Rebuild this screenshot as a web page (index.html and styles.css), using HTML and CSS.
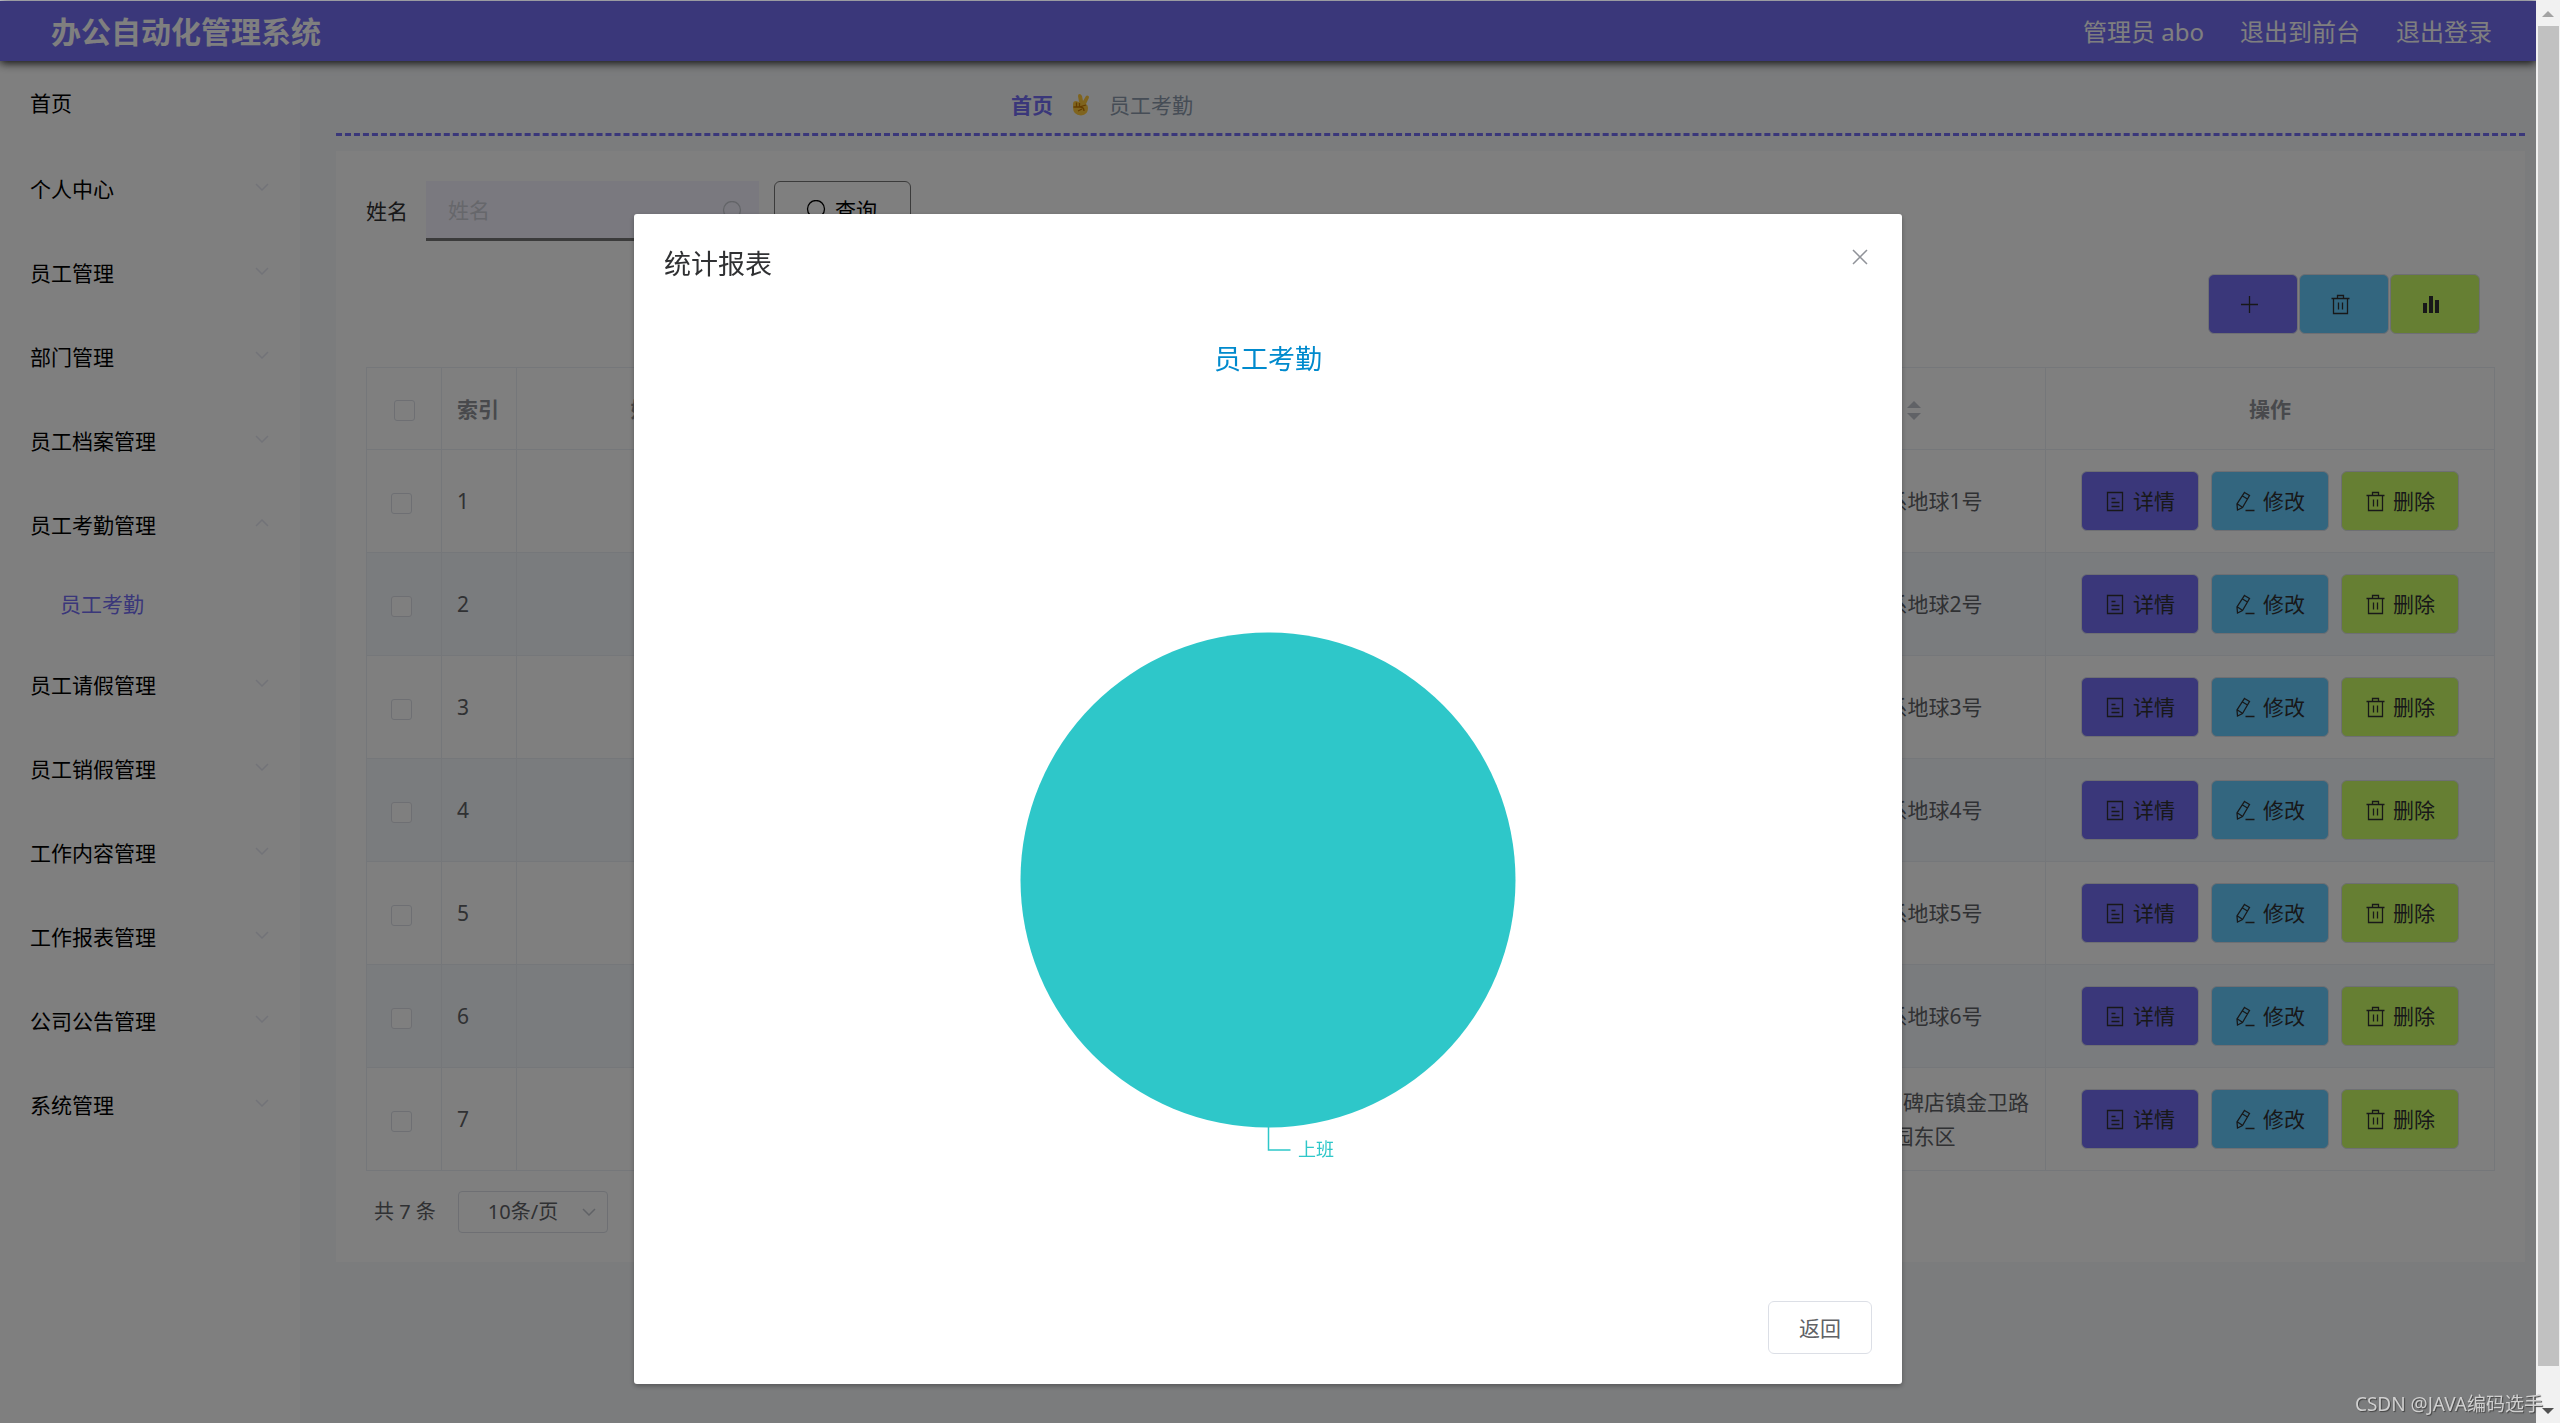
FILE: index.html
```html
<!DOCTYPE html>
<html lang="zh-CN">
<head>
<meta charset="utf-8">
<title>办公自动化管理系统</title>
<link rel="stylesheet" href="styles.css">
</head>
<body>
<svg class="sprite" aria-hidden="true">
  <symbol id="i-down" viewBox="0 0 14 8"><path d="M1 1l6 6 6-6"/></symbol>
  <symbol id="i-up" viewBox="0 0 14 8"><path d="M1 7l6-6 6 6"/></symbol>
  <symbol id="i-search" viewBox="0 0 21 21"><circle cx="10" cy="9" r="8.5"/><path d="M16 15l4 5"/></symbol>
  <symbol id="i-plus" viewBox="0 0 21 21"><path d="M2 10.5h17M10.5 2v17"/></symbol>
  <symbol id="i-trash" viewBox="0 0 21 21"><path d="M1.500 4.500h18M7.500 4.500v-3h6v3M3.500 4.500v15h14v-15M8.500 8.500v7M12.500 8.500v7"/></symbol>
  <symbol id="i-chart" viewBox="0 0 21 21"><path class="solid" d="M2 9h4v10H2zM8 2h4v17H8zM14 6h4v13h-4z"/></symbol>
  <symbol id="i-doc" viewBox="0 0 21 21"><path d="M2.500 1.500h15v18h-15zM6.500 7.500h4M6.500 11.500h8M6.500 15.500h8"/></symbol>
  <symbol id="i-edit" viewBox="0 0 21 21"><path d="M9.500 1.500l5 3-7 12-5 2.500-.5-6zM7.500 5l5 3M2.500 13l4.500 3M10.500 19.500h9"/></symbol>
  <symbol id="i-close" viewBox="0 0 16 16"><path d="M1 1l14 14M15 1L1 15"/></symbol>
</svg>

<div class="page">
  <header class="topbar">
    <h1 class="brand">办公自动化管理系统</h1>
    <nav class="account">
      <span>管理员 abo</span>
      <a href="#">退出到前台</a>
      <a href="#">退出登录</a>
    </nav>
  </header>

  <div class="body">
    <nav class="sidebar">
      <a class="item home" href="#">首页</a>
      <a class="item" href="#">个人中心<svg class="arrow"><use href="#i-down"/></svg></a>
      <a class="item" href="#">员工管理<svg class="arrow"><use href="#i-down"/></svg></a>
      <a class="item" href="#">部门管理<svg class="arrow"><use href="#i-down"/></svg></a>
      <a class="item" href="#">员工档案管理<svg class="arrow"><use href="#i-down"/></svg></a>
      <a class="item" href="#">员工考勤管理<svg class="arrow"><use href="#i-up"/></svg></a>
      <a class="subitem" href="#">员工考勤</a>
      <a class="item" href="#">员工请假管理<svg class="arrow"><use href="#i-down"/></svg></a>
      <a class="item" href="#">员工销假管理<svg class="arrow"><use href="#i-down"/></svg></a>
      <a class="item" href="#">工作内容管理<svg class="arrow"><use href="#i-down"/></svg></a>
      <a class="item" href="#">工作报表管理<svg class="arrow"><use href="#i-down"/></svg></a>
      <a class="item" href="#">公司公告管理<svg class="arrow"><use href="#i-down"/></svg></a>
      <a class="item" href="#">系统管理<svg class="arrow"><use href="#i-down"/></svg></a>
    </nav>

    <main class="content">
      <div class="crumbs">
        <a href="#">首页</a>
        <svg class="hand" viewBox="0 0 18 22"><path fill="#ffc83d" d="M1 10q0-3 3-3l3 1L6 2q0-2 1.500-2T10 2l1 5 3-5q1-1 2.500 0 .8 1 .3 2L14 10q2 1 2 4 0 7-7 7.500-8-.5-8-8z"/><path fill="none" stroke="#c87800" stroke-width="1.300" d="M1.500 13h6V9M4.500 8.500V13M7 13l7-2M8 13q4 0 4 4M6 17l4-2"/></svg>
        <span>员工考勤</span>
      </div>

      <section class="card">
        <form class="search">
          <label for="name">姓名</label>
          <div class="field">
            <input id="name" type="text" placeholder="姓名">
            <svg class="icon"><use href="#i-search"/></svg>
          </div>
          <button class="query" type="button"><svg class="icon"><use href="#i-search"/></svg>查询</button>
        </form>

        <div class="tools">
          <button class="tool violet" type="button" aria-label="新增"><svg class="icon"><use href="#i-plus"/></svg></button>
          <button class="tool blue" type="button" aria-label="删除"><svg class="icon"><use href="#i-trash"/></svg></button>
          <button class="tool green" type="button" aria-label="统计报表"><svg class="icon"><use href="#i-chart"/></svg></button>
        </div>

        <table class="grid">
          <colgroup><col class="c-check"><col class="c-index"><col><col><col><col><col><col class="c-ops"></colgroup>
          <thead>
            <tr>
              <th><input type="checkbox" aria-label="全选"></th>
              <th class="left">索引</th>
              <th>姓名<span class="sort"></span></th><th></th><th></th><th></th>
              <th>地址<span class="sort"></span></th>
              <th>操作</th>
            </tr>
          </thead>
          <tbody id="rows"></tbody>
        </table>

        <div class="pager">
          <span>共 7 条</span>
          <div class="size">
            <select aria-label="每页条数"><option>10条/页</option></select>
            <svg class="arrow"><use href="#i-down"/></svg>
          </div>
        </div>
      </section>
    </main>
  </div>
</div>

<div class="overlay">
  <section class="dialog" role="dialog" aria-labelledby="dialog-title">
    <header class="dialog-head">
      <h2 id="dialog-title">统计报表</h2>
      <button class="close" type="button" aria-label="关闭"><svg><use href="#i-close"/></svg></button>
    </header>
    <svg class="chart" viewBox="0 0 1208 900" role="img" aria-label="员工考勤">
      <text class="chart-title" x="604" y="29">员工考勤</text>
      <circle class="slice" cx="604" cy="540" r="247.500"/>
      <path class="leader" d="M604.500 787v23h22"/>
      <text class="chart-label" x="634" y="816">上班</text>
    </svg>
    <footer class="dialog-foot"><button type="button">返回</button></footer>
  </section>
</div>

<div class="scrollbar" aria-hidden="true"><i class="up"></i><b></b><i class="down"></i></div>
<p class="watermark">CSDN @JAVA编码选手</p>

<script src="rows.js"></script>
</body>
</html>
```

FILE: rows.js
```js
const addresses = [1, 2, 3, 4, 5, 6].map(n => `宇宙银河系地球${n}号`);
addresses.push('北京市朝阳区高碑店镇金卫路文化家园东区');

const action = (tone, icon, label) =>
  `<button class="action ${tone}" type="button"><svg class="icon"><use href="#${icon}"/></svg>${label}</button>`;

document.getElementById('rows').innerHTML = addresses.map((address, i) => `
  <tr>
    <td class="check"><input type="checkbox" aria-label="选择第${i + 1}行"></td>
    <td class="left">${i + 1}</td>
    <td></td><td></td><td></td><td></td>
    <td>${address}</td>
    <td><div class="actions">
      ${action('violet', 'i-doc', '详情')}
      ${action('blue', 'i-edit', '修改')}
      ${action('green', 'i-trash', '删除')}
    </div></td>
  </tr>`).join('');
```

FILE: styles.css
```css
* { box-sizing: border-box; }

body {
  margin: 0;
  font: 21px/34px "Noto Sans", "Noto Sans CJK SC", sans-serif;
  color: #606266;
  background: #f6f8fb;
}

a { color: inherit; text-decoration: none; }
h1, h2, p { margin: 0; }
button, input, select { font: inherit; color: inherit; margin: 0; }

svg { fill: none; stroke: currentColor; }
.sprite { position: absolute; width: 0; height: 0; }
.icon { width: 21px; height: 21px; flex: none; stroke-width: 1.3; }
.solid { fill: currentColor; stroke: none; }
.arrow { width: 14px; height: 8px; stroke-width: 1.5; }

.page {
  display: flex;
  flex-direction: column;
  min-height: 100vh;
  margin-right: 24px;
  border-top: 1px solid #d4d6de;
}

/* Top bar */
.topbar {
  position: relative;
  display: flex;
  align-items: center;
  justify-content: space-between;
  height: 60px;
  padding: 2px 44px 0 51px;
  color: #fff;
  background: #746ef4;
  box-shadow: 0 2px 9px rgba(0, 0, 0, .9);
}
.brand { font-size: 30px; line-height: 40px; }
.account { display: flex; gap: 36px; font-size: 24px; }

.body { display: flex; flex: 1; }

/* Side menu */
.sidebar { flex: none; width: 300px; background: #fff; color: #000; }
.item {
  display: flex;
  align-items: center;
  justify-content: space-between;
  height: 84px;
  padding: 0 31px 0 30px;
}
.home { height: 86px; padding-bottom: 2px; }
.item .arrow { color: #e4e6f0; margin-bottom: 4px; }
.subitem {
  display: flex;
  align-items: center;
  height: 76px;
  padding: 0 0 2px 60px;
  color: #746ef4;
}

/* Content */
.content { flex: 1; padding: 28px 11px 0 36px; }
.crumbs {
  display: flex;
  align-items: center;
  gap: 19px;
  height: 47px;
  padding: 0 0 13px 675px;
  margin-bottom: 15px;
  border-bottom: 3px dashed #746ef4;
  color: #8c9aac;
}
.crumbs a { font-weight: 700; color: #746ef4; }
.hand { width: 18px; height: 22px; stroke: none; }

.card { padding: 30px 30px 29px; background: #fff; }
.search { display: flex; align-items: center; color: #303133; }
.field { position: relative; width: 333px; margin: 0 15px 0 18px; }
.field input {
  display: block;
  width: 100%;
  height: 60px;
  padding: 0 45px 0 22px;
  border: 0;
  border-bottom: 3px solid #777;
  background: #f4f3fe;
}
.field input::placeholder { color: #cdced6; }
.field .icon { position: absolute; right: 16px; top: 20px; color: #c6c8d0; }
.query {
  display: flex;
  align-items: center;
  justify-content: center;
  gap: 8px;
  width: 137px;
  height: 60px;
  padding: 0 2px 2px 0;
  border: 1px solid #777;
  border-radius: 6px;
  background: none;
  color: #000;
}

.tools { display: flex; justify-content: flex-end; gap: 1px; padding: 33px 15px 33px 0; }
.tool, .action {
  display: flex;
  align-items: center;
  height: 60px;
  border: 1px solid #dcdfe6;
  border-radius: 6px;
  color: #303133;
}
.tool { width: 90px; padding: 0 30px; }
.violet { background: #746ef4; }
.blue { background: #66ccff; }
.green { background: #ccff66; }

.grid {
  width: 100%;
  table-layout: fixed;
  border-collapse: collapse;
}
.c-check, .c-index { width: 75px; }
.c-ops { width: 449px; }
.grid th, .grid td { border: 1px solid #ebeef5; text-align: center; }
.grid th { height: 82px; padding: 0 15px; color: #909399; }
.grid td { height: 103px; padding: 0 14px; }
.grid .left { text-align: left; padding-left: 15px; }
.grid td.check { padding-right: 20px; }
.grid tbody tr:nth-child(even) { background: #f5f8fd; }
.grid input {
  appearance: none;
  display: inline-block;
  width: 21px;
  height: 21px;
  border: 1px solid #dcdfe6;
  border-radius: 3px;
  background: #fff;
  vertical-align: middle;
}
.sort {
  display: inline-flex;
  flex-direction: column;
  align-items: center;
  gap: 5px;
  width: 36px;
  vertical-align: middle;
}
.sort::before, .sort::after { content: ""; border: 7px solid transparent; }
.sort::before { border-top: 0; border-bottom-color: #c0c4cc; }
.sort::after { border-bottom: 0; border-top-color: #c0c4cc; }

.actions { display: flex; justify-content: center; gap: 12px; }
.action { gap: 7px; width: 118px; padding: 0 0 0 23px; }

.pager { display: flex; align-items: center; gap: 22px; padding: 20px 0 0 8px; font-size: 20px; }
.size { position: relative; width: 150px; }
.size select {
  display: block;
  appearance: none;
  width: 100%;
  height: 42px;
  padding: 0 45px 0 29px;
  border: 1px solid #dcdfe6;
  border-radius: 4px;
  background: #fff;
}
.size .arrow { position: absolute; right: 12px; top: 17px; color: #c0c4cc; }

/* Dialog */
.overlay { position: fixed; inset: 1px 24px 0 0; background: rgba(0, 0, 0, .5); }
.dialog {
  width: 50%;
  margin: 15vh auto 0;
  padding: 30px;
  border-radius: 3px;
  background: #fff;
  box-shadow: 0 2px 5px rgba(0, 0, 0, .3);
}
.dialog-head { display: flex; justify-content: space-between; align-items: flex-start; }
.dialog-head h2 { font-size: 27px; line-height: 40px; font-weight: 400; color: #303133; }
.close { display: flex; padding: 5px 4px; border: 0; background: none; color: #909399; }
.close svg { width: 16px; height: 16px; stroke-width: 1.5; }
.chart { display: block; width: 100%; margin: 56px 0 61px; }
.chart text { stroke: none; }
.chart-title { font-size: 27px; fill: #008acd; text-anchor: middle; }
.slice { fill: #2ec7c9; stroke: none; }
.leader { stroke: #2ec7c9; stroke-width: 1.5; }
.chart-label { font-size: 18px; fill: #2ec7c9; }
.dialog-foot { display: flex; justify-content: flex-end; }
.dialog-foot button {
  width: 104px;
  height: 53px;
  padding: 0;
  border: 1px solid #dcdfe6;
  border-radius: 6px;
  background: #fff;
}

/* Window scrollbar */
.scrollbar {
  position: fixed;
  inset: 0 0 0 auto;
  display: flex;
  flex-direction: column;
  align-items: center;
  width: 24px;
  padding: 11px 0 9px;
  background: #f1f1f1;
}
.scrollbar i { border: 6px solid transparent; }
.scrollbar .up { border-top: 0; border-bottom-color: #a3a3a3; }
.scrollbar .down { border-bottom: 0; border-top-color: #505050; }
.scrollbar b { flex: 1; width: 21px; margin: 9px 0 42px; background: #c1c1c1; }

.watermark {
  position: fixed;
  right: 17px;
  bottom: 2px;
  font-size: 19px;
  color: #d0d0d0;
  text-shadow: 1px 1px 1px #444;
}
```
